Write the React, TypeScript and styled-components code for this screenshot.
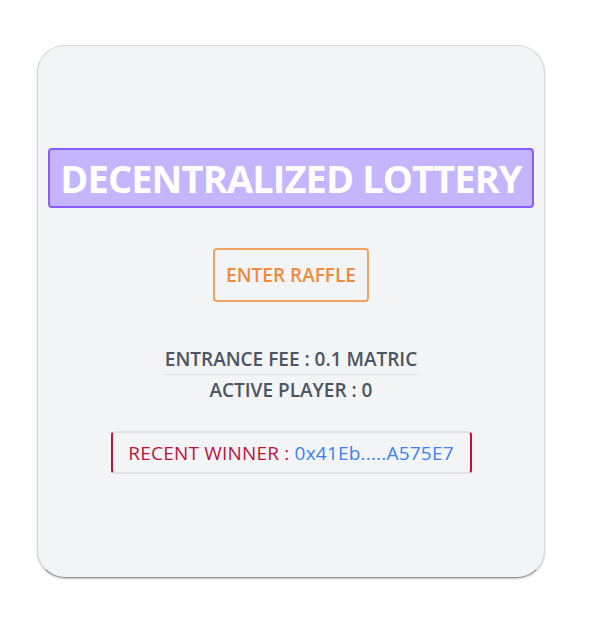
import React from "react";
import styled, { createGlobalStyle } from "styled-components";

const Global = createGlobalStyle`
  html, body { margin: 0; padding: 0; background: #ffffff; }
  body { font-family: "Open Sans", "Noto Sans", sans-serif; }
`;

const Page = styled.div`
  padding: 45px 46px 44px 37px;
`;

const Card = styled.div`
  width: 508px;
  height: 533px;
  box-sizing: border-box;
  background: #f3f4f6;
  border: 1px solid #d9dadd;
  border-bottom-color: #8f9095;
  border-radius: 28px;
  box-shadow: 0 1px 2px rgba(0, 0, 0, 0.25);
  display: flex;
  flex-direction: column;
  align-items: center;
  padding-top: 102px;
`;

const Title = styled.h1`
  margin: 0;
  width: 486px;
  height: 60px;
  box-sizing: border-box;
  background: #c4b5fd;
  border: 2px solid #8b5cf6;
  border-radius: 4px;
  color: #ffffff;
  font-size: 38px;
  font-weight: 700;
  letter-spacing: -0.9px;
  display: flex;
  align-items: center;
  justify-content: center;
`;

const EnterButton = styled.button`
  margin-top: 40px;
  width: 156px;
  height: 54px;
  box-sizing: border-box;
  background: transparent;
  border: 2px solid #f4a261;
  border-radius: 4px;
  color: #f08a3c;
  font-family: inherit;
  font-size: 19px;
  font-weight: 600;
  cursor: pointer;
`;

const Info = styled.div`
  margin-top: 45px;
  display: flex;
  flex-direction: column;
  align-items: center;
  color: #4b5563;
  font-size: 19px;
  font-weight: 600;
`;

const InfoLine = styled.div<{ $divider?: boolean }>`
  line-height: 24px;
  padding-bottom: ${(p) => (p.$divider ? "3px" : "0")};
  border-bottom: ${(p) => (p.$divider ? "1px solid #dcdde0" : "none")};
  margin-bottom: ${(p) => (p.$divider ? "3px" : "0")};
`;

const Winner = styled.div`
  margin-top: 29px;
  width: 361px;
  height: 43px;
  box-sizing: border-box;
  border: 2px solid #e2e3e6;
  border-left-color: #be123c;
  border-right-color: #be123c;
  border-radius: 4px;
  display: flex;
  align-items: center;
  justify-content: center;
  font-size: 19px;
  font-weight: 500;
  letter-spacing: 0.2px;
`;

const Label = styled.span`
  color: #be123c;
  white-space: pre;
`;

const Address = styled.span`
  color: #3b82f6;
`;

export default function App() {
  return (
    <>
      <Global />
      <Page>
        <Card>
          <Title>DECENTRALIZED LOTTERY</Title>
          <EnterButton>ENTER RAFFLE</EnterButton>
          <Info>
            <InfoLine $divider>ENTRANCE FEE : 0.1 MATRIC</InfoLine>
            <InfoLine>ACTIVE PLAYER : 0</InfoLine>
          </Info>
          <Winner>
            <Label>RECENT WINNER : </Label>
            <Address>0x41Eb.....A575E7</Address>
          </Winner>
        </Card>
      </Page>
    </>
  );
}
